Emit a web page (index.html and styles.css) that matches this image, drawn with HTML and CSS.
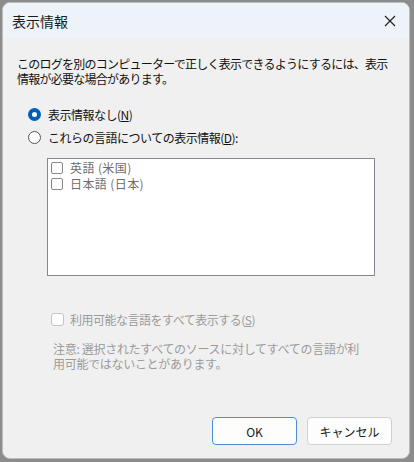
FILE: index.html
```html
<!DOCTYPE html>
<html lang="ja">
<head>
  <meta charset="UTF-8" />
  <title>表示情報</title>
  <link rel="stylesheet" href="styles.css">
</head>
<body>

<div class="dialog">
  <div class="titlebar">
    <span class="title">表示情報</span>
    <svg class="close" width="12" height="12" viewBox="0 0 12 12">
      <path d="M1 1 L11 11 M11 1 L1 11" stroke="#222" stroke-width="1.2" fill="none"/>
    </svg>
  </div>

  <div class="content">
    <p class="intro">このログを別のコンピューターで正しく表示できるようにするには、表示情報が必要な場合があります。</p>

    <label class="radio-row">
      <span class="radio checked"></span>
      <span>表示情報なし(<u>N</u>)</span>
    </label>
    <label class="radio-row">
      <span class="radio"></span>
      <span>これらの言語についての表示情報(<u>D</u>):</span>
    </label>

    <div class="listbox">
      <div class="item"><span class="box"></span>英語 (米国)</div>
      <div class="item"><span class="box"></span>日本語 (日本)</div>
    </div>

    <div class="show-all">
      <span class="box big"></span>
      <span>利用可能な言語をすべて表示する(<u>S</u>)</span>
    </div>

    <p class="note">注意: 選択されたすべてのソースに対してすべての言語が利用可能ではないことがあります。</p>

    <div class="buttons">
      <button class="primary">OK</button>
      <button>キャンセル</button>
    </div>
  </div>
</div>

</body>
</html>
```

FILE: styles.css
```css
body {
  margin: 0;
  background: #8c8c8c;
  font-family: "Noto Sans CJK JP", "Noto Sans", sans-serif;
  height: 462px;
  overflow: hidden;
}
.dialog {
  margin: 2px 0 0 2px;
  width: 406px;
  height: 455px;
  background: #f0f0f0;
  border: 1px solid #bdbdbd;
  border-radius: 8px;
  overflow: hidden;
  display: flex;
  flex-direction: column;
}
.titlebar {
  height: 35px;
  background: #eef2f9;
  display: flex;
  align-items: center;
  justify-content: space-between;
  padding: 0 13px 0 9px;
}
.title {
  font-size: 14px;
  color: #1a1a1a;
}
.content {
  flex: 1;
  padding: 18px 20px 0 14px;
  display: flex;
  flex-direction: column;
  font-size: 12px;
  color: #111;
}
.intro {
  margin: 0;
  line-height: 15px;
  letter-spacing: -0.75px;
}
.radio-row {
  display: flex;
  align-items: center;
  gap: 7px;
  margin-left: 11px;
  height: 23px;
  letter-spacing: -0.5px;
}
.radio-row:first-of-type { margin-top: 17px; }
.radio {
  width: 13px;
  height: 13px;
  border: 1px solid #555;
  border-radius: 50%;
  box-sizing: border-box;
  background: #fff;
}
.radio.checked {
  border: 4px solid #005fb8;
  background: #fff;
}
.listbox {
  margin: 9px 0 0 30px;
  width: 328px;
  height: 118px;
  background: #fff;
  border: 1px solid #828790;
  padding: 1px 3px;
  box-sizing: border-box;
}
.item {
  display: flex;
  align-items: center;
  gap: 7px;
  height: 16px;
  line-height: 16px;
  font-size: 12px;
  letter-spacing: 0.4px;
  color: #6d6d6d;
}
.box {
  width: 12px;
  height: 12px;
  border: 1px solid #8a8a8a;
  border-radius: 2px;
  box-sizing: border-box;
  background: #fff;
}
.box.big {
  width: 13px;
  height: 13px;
  border-color: #c4c4c4;
  border-radius: 3px;
}
.show-all {
  display: flex;
  align-items: center;
  gap: 6px;
  margin: 35px 0 0 34px;
  color: #9b9b9b;
  letter-spacing: -0.5px;
}
.note {
  margin: 13px 0 0 36px;
  width: 312px;
  color: #9b9b9b;
  line-height: 15px;
  letter-spacing: -0.3px;
}
.buttons {
  margin: auto -3px 13px 0;
  display: flex;
  justify-content: flex-end;
  gap: 10px;
}
button {
  width: 85px;
  height: 28px;
  font-family: inherit;
  font-size: 12px;
  background: #fdfdfd;
  border: 1px solid #d0d0d0;
  border-radius: 4px;
  color: #1a1a1a;
}
button.primary {
  border: 1.5px solid #4a8fd6;
}
```
